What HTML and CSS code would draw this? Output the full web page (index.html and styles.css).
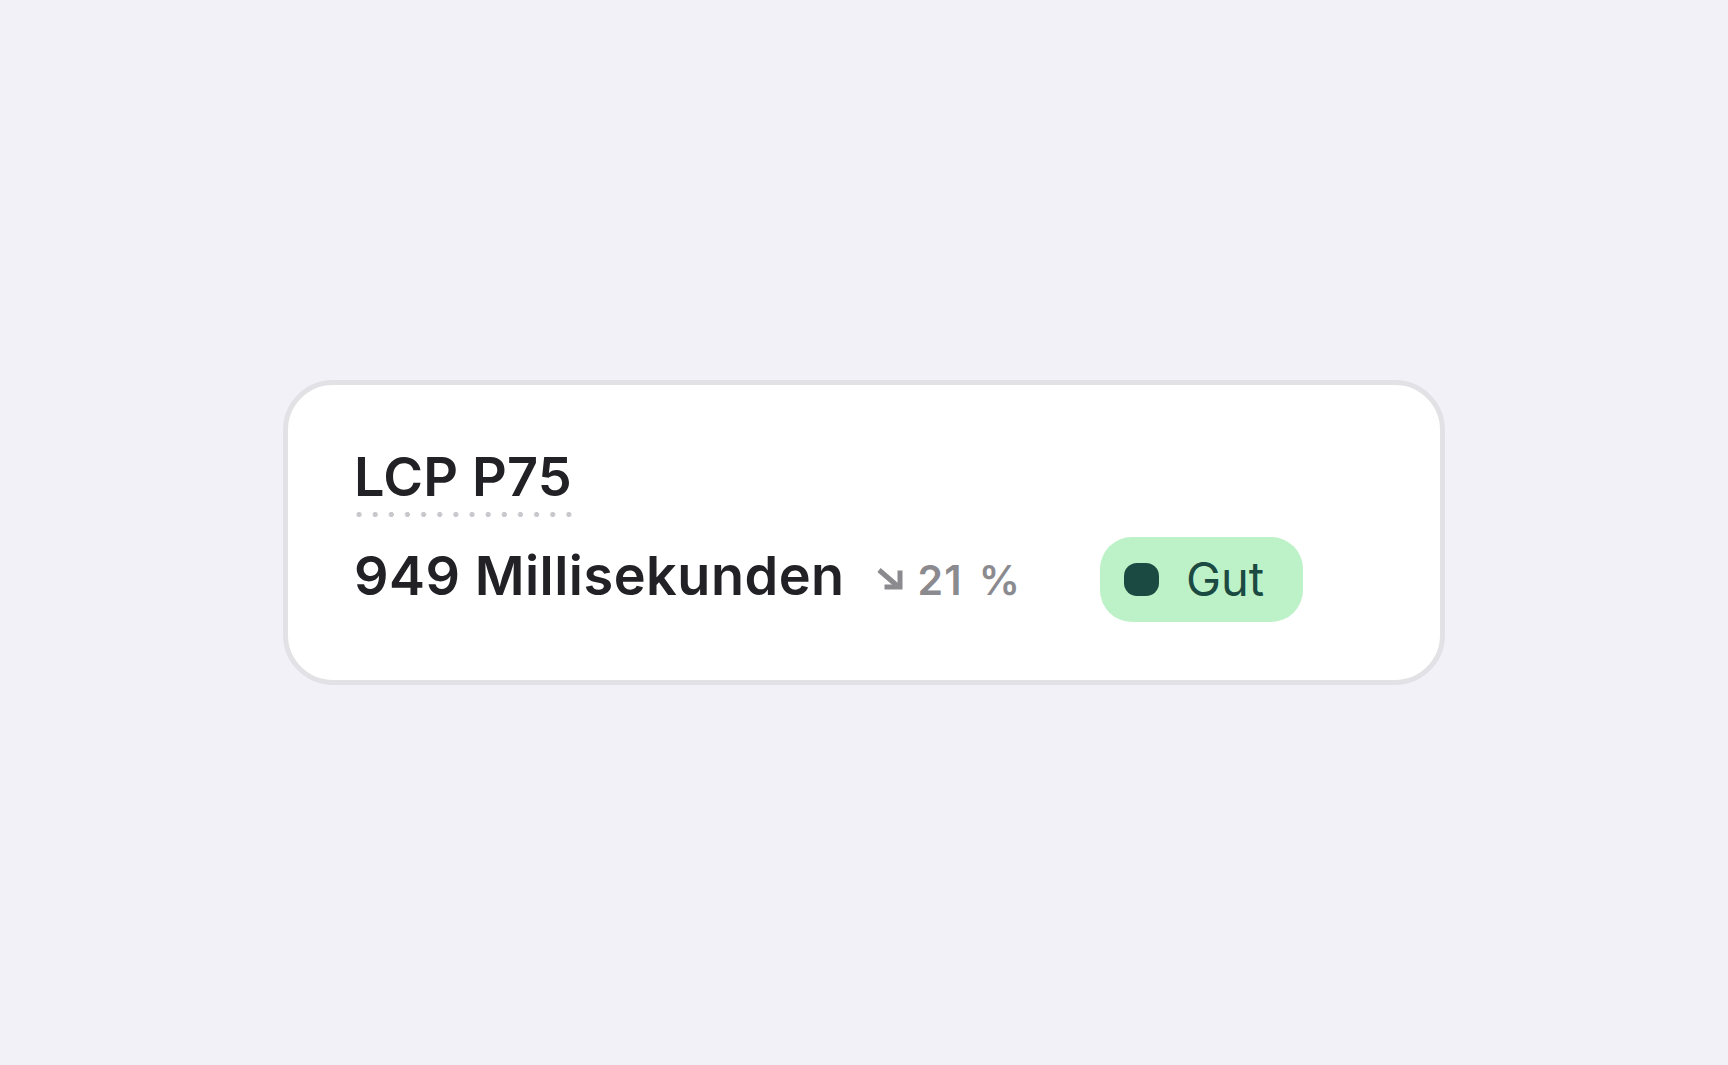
FILE: index.html
```html
<!DOCTYPE html>
<html lang="de">
<head>
<meta charset="utf-8">
<title>LCP P75</title>
<link rel="stylesheet" href="styles.css">
</head>
<body>
  <main class="page">
    <section class="card">
      <div class="title"><span class="title-text">LCP P75</span></div>
      <div class="row">
        <div class="value">
          <span class="value-text">949 Millisekunden</span>
          <span class="delta">
            <svg class="delta-icon" width="26" height="22" viewBox="0 0 26 22" aria-hidden="true">
              <path d="M2 2 L20.5 18" fill="none" stroke="currentColor" stroke-width="5"/>
              <path d="M23 2.5 V19 H7.5" fill="none" stroke="currentColor" stroke-width="5"/>
            </svg>
            <span class="delta-text">21 %</span>
          </span>
        </div>
        <div class="badge">
          <span class="badge-dot"></span>
          <span class="badge-text">Gut</span>
        </div>
      </div>
    </section>
  </main>
</body>
</html>
```

FILE: styles.css
```css
html, body {
  margin: 0;
  padding: 0;
}

body {
  background: #f3f1f8;
  font-family: Inter, "Noto Sans", "Liberation Sans", sans-serif;
  color: #222125;
}

.page {
  height: 1065px;
  display: flex;
  align-items: center;
  justify-content: center;
}

.card {
  box-sizing: border-box;
  width: 1162px;
  height: 305px;
  background: #ffffff;
  border: 5px solid #e2e1e5;
  border-radius: 50px;
  padding: 60px 65px 58px 66px;
  display: flex;
  flex-direction: column;
  gap: 20px;
}

.title {
  display: flex;
}

.title-text {
  display: inline-block;
  font-size: 54px;
  line-height: 64px;
  font-weight: 600;
  letter-spacing: 0.2px;
  padding-bottom: 8px;
  background-image: radial-gradient(circle at 5px 2.5px, #c9c8cd 2.3px, transparent 2.9px);
  background-size: 16.15px 5px;
  background-repeat: repeat-x;
  background-position: 0 100%;
}

.row {
  display: flex;
  align-items: flex-start;
  gap: 79px;
}

.value {
  display: flex;
  align-items: baseline;
  margin-top: 7px;
}

.value-text {
  font-size: 54px;
  line-height: 64px;
  font-weight: 600;
  letter-spacing: 0.5px;
}

.delta {
  display: flex;
  align-items: baseline;
  gap: 15px;
  margin-left: 32px;
  color: #8b8a8f;
}

.delta-icon {
  align-self: center;
  position: relative;
  top: -1px;
}

.delta-text {
  font-size: 41px;
  line-height: 64px;
  font-weight: 600;
  letter-spacing: 1px;
  word-spacing: 5px;
}

.badge {
  box-sizing: border-box;
  height: 85px;
  display: flex;
  align-items: center;
  gap: 27px;
  padding: 0 39px 0 24px;
  background: #bdf2c8;
  border-radius: 32px;
  color: #1b4a42;
}

.badge-dot {
  width: 35px;
  height: 33px;
  border-radius: 13px;
  background: #1b4a42;
}

.badge-text {
  font-size: 47px;
  line-height: 1;
  font-weight: 400;
  padding-bottom: 3px;
}
```
